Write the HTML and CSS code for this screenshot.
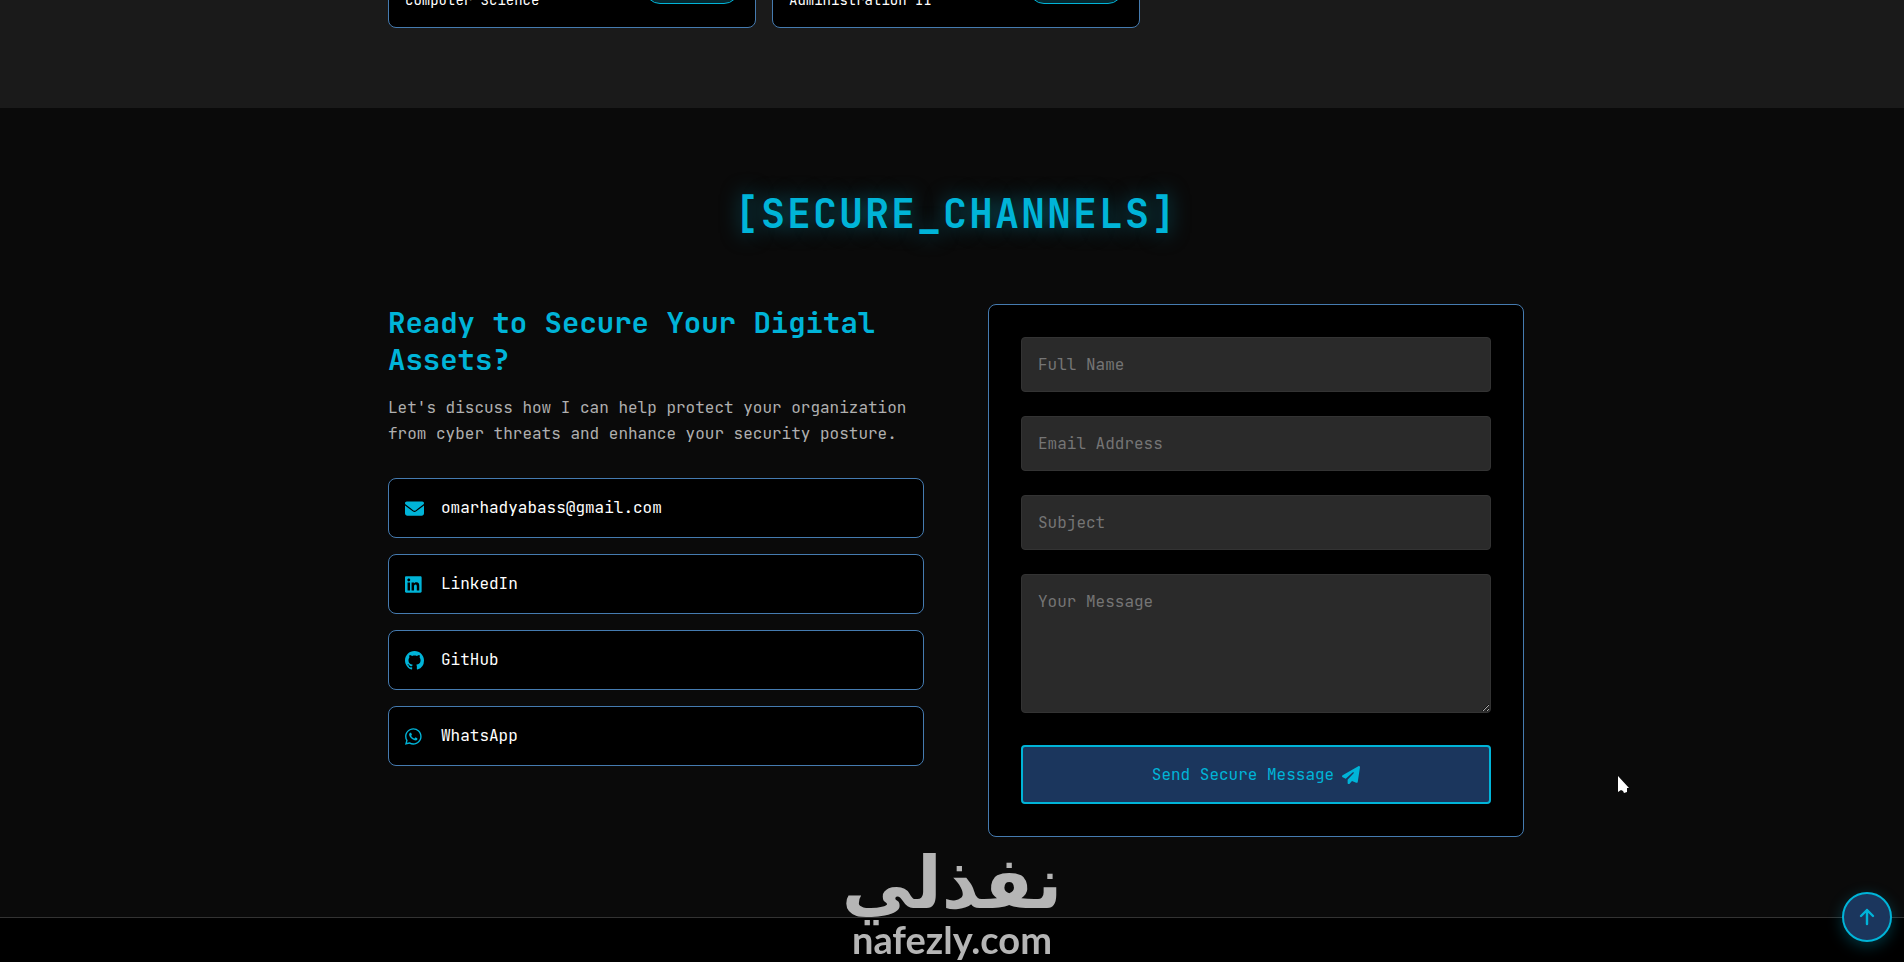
FILE: index.html
```html
<!DOCTYPE html>
<html lang="en">
<head>
    <meta charset="utf-8">
    <meta name="viewport" content="width=device-width, initial-scale=1">
    <title>Secure Channels</title>
    <link rel="stylesheet" href="styles.css">
</head>
<body>
    <section class="courses">
        <div class="container courses-grid">
            <div class="course-card">
                <span>Computer Science</span>
                <span class="course-badge"></span>
            </div>
            <div class="course-card">
                <span>Administration II</span>
                <span class="course-badge"></span>
            </div>
        </div>
    </section>

    <section class="contact" id="contact">
        <div class="container">
            <h2 class="section-title">[SECURE_CHANNELS]</h2>
            <div class="contact-content">
                <div class="contact-info">
                    <h3>Ready to Secure Your Digital Assets?</h3>
                    <p>Let's discuss how I can help protect your organization from cyber threats and enhance your security posture.</p>
                    <div class="contact-links">
                        <a class="contact-link" href="mailto:omarhadyabass@gmail.com">
                            <svg class="icon" viewBox="0 0 512 512"><path d="M48 64C21.500 64 0 85.500 0 112c0 15.100 7.100 29.300 19.200 38.400L236.800 313.600c11.400 8.500 27 8.500 38.400 0L492.800 150.400c12.100-9.100 19.200-23.300 19.200-38.400c0-26.500-21.500-48-48-48H48zM0 176V384c0 35.300 28.700 64 64 64H448c35.300 0 64-28.700 64-64V176L294.400 339.200c-22.800 17.100-54 17.100-76.800 0L0 176z"/></svg>
                            <span>omarhadyabass@gmail.com</span>
                        </a>
                        <a class="contact-link" href="#">
                            <svg class="icon" viewBox="0 0 512 512"><path d="M416 32H31.900C14.300 32 0 46.500 0 64.300v383.400C0 465.500 14.300 480 31.900 480H416c17.600 0 32-14.500 32-32.300V64.300c0-17.800-14.400-32.300-32-32.300zM135.400 416H69V202.200h66.500V416zm-33.200-243c-21.300 0-38.500-17.300-38.500-38.500S80.900 96 102.200 96c21.200 0 38.500 17.300 38.500 38.500 0 21.300-17.200 38.500-38.500 38.500zm282.100 243h-66.400V312c0-24.800-.5-56.700-34.500-56.700-34.600 0-39.900 27-39.900 54.900V416h-66.400V202.200h63.700v29.200h.9c8.900-16.800 30.600-34.500 62.900-34.500 67.200 0 79.700 44.300 79.700 101.900V416z"/></svg>
                            <span>LinkedIn</span>
                        </a>
                        <a class="contact-link" href="#">
                            <svg class="icon" viewBox="0 0 16 16"><path d="M8 0C3.580 0 0 3.580 0 8c0 3.540 2.290 6.530 5.470 7.590.4.070.55-.17.55-.38 0-.19-.01-.82-.01-1.490-2.010.37-2.530-.49-2.690-.94-.09-.23-.48-.94-.82-1.130-.28-.15-.68-.52-.01-.53.63-.01 1.080.58 1.230.82.72 1.210 1.870.87 2.330.66.07-.52.28-.87.51-1.070-1.780-.2-3.640-.89-3.640-3.950 0-.87.31-1.590.82-2.150-.08-.2-.36-1.020.08-2.120 0 0 .67-.21 2.200.82.64-.18 1.320-.27 2-.27s1.360.09 2 .27c1.530-1.040 2.200-.82 2.200-.82.44 1.100.16 1.920.08 2.120.51.56.82 1.270.82 2.150 0 3.070-1.870 3.750-3.650 3.950.29.25.54.73.54 1.480 0 1.070-.01 1.930-.01 2.200 0 .21.15.46.55.38A8.010 8.010 0 0 0 16 8c0-4.420-3.580-8-8-8z"/></svg>
                            <span>GitHub</span>
                        </a>
                        <a class="contact-link" href="#">
                            <svg class="icon" viewBox="0 0 512 512"><path d="M380.900 97.100C339 55.100 283.200 32 223.900 32c-122.400 0-222 99.600-222 222 0 39.100 10.200 77.300 29.600 111L0 480l117.700-30.900c32.400 17.700 68.900 27 106.100 27h.1c122.300 0 224.100-99.600 224.100-222 0-59.300-25.200-115-67.100-157zm-157 341.600c-33.200 0-65.700-8.900-94-25.700l-6.700-4-69.800 18.300L72 359.200l-4.400-7c-18.500-29.400-28.200-63.300-28.200-98.200 0-101.700 82.800-184.500 184.600-184.500 49.300 0 95.600 19.200 130.400 54.100 34.800 34.900 56.200 81.200 56.100 130.500 0 101.800-84.900 184.600-186.600 184.600zm101.200-138.200c-5.500-2.800-32.800-16.200-37.900-18-5.100-1.900-8.800-2.800-12.500 2.800-3.700 5.600-14.300 18-17.600 21.800-3.200 3.700-6.500 4.200-12 1.400-32.600-16.300-54-29.100-75.500-66-5.700-9.800 5.700-9.100 16.300-30.300 1.800-3.700.9-6.900-.5-9.700-1.400-2.800-12.500-30.100-17.100-41.200-4.500-10.800-9.100-9.300-12.500-9.500-3.200-.2-6.900-.2-10.600-.2-3.700 0-9.700 1.400-14.800 6.900-5.100 5.600-19.400 19-19.400 46.300 0 27.300 19.900 53.700 22.600 57.400 2.800 3.700 39.100 59.700 94.800 83.800 35.200 15.200 49 16.500 66.600 13.900 10.700-1.600 32.800-13.400 37.400-26.400 4.600-13 4.600-24.100 3.200-26.400-1.300-2.500-5-3.900-10.500-6.600z"/></svg>
                            <span>WhatsApp</span>
                        </a>
                    </div>
                </div>

                <form class="contact-form">
                    <input type="text" placeholder="Full Name" aria-label="Full Name">
                    <input type="email" placeholder="Email Address" aria-label="Email Address">
                    <input type="text" placeholder="Subject" aria-label="Subject">
                    <textarea rows="5" placeholder="Your Message" aria-label="Your Message"></textarea>
                    <button class="btn" type="submit">
                        <span>Send Secure Message</span>
                        <svg class="btn-icon" viewBox="0 0 512 512"><path d="M498.100 5.600c10.100 7 15.400 19.100 13.500 31.200l-64 416c-1.500 9.700-7.400 18.200-16 23s-18.900 5.400-28 1.600L284 427.700l-68.500 74.100c-8.900 9.700-22.900 12.900-35.200 8.100S160 493.200 160 480V396.400c0-4 1.500-7.800 4.200-10.700L331.800 202.800c5.800-6.300 5.600-16-.4-22s-15.700-6.400-22-.7L106 360.800 17.700 316.600C7.100 311.300.3 300.700 0 288.900s5.900-22.800 16.100-28.700l448-256c10.700-6.100 23.900-5.500 34 1.400z"/></svg>
                    </button>
                </form>
            </div>
        </div>
    </section>

    <footer class="footer"></footer>

    <button class="back-to-top" type="button" aria-label="Back to top">
        <svg viewBox="0 0 18 18"><path d="M9 16V2M3 8l6-6 6 6"/></svg>
    </button>

    <div class="watermark">
        <span class="watermark-ar" lang="ar" dir="rtl">نفذلي</span>
        <span class="watermark-en">nafezly.com</span>
    </div>

    <svg class="cursor" viewBox="0 0 11 17"><path d="M0 0v16l3-2 2 1 1 2 3-1v-4h2z"/></svg>
</body>
</html>
```
FILE: styles.css
```css
* {
    margin: 0;
    padding: 0;
    box-sizing: border-box;
}

:root {
    --accent: #00b4d8;
    --navy: #1b365d;
    --line: #457bb0;
    --dark: #0a0a0a;
    --grey: #2a2a2a;
}

body {
    display: flex;
    flex-direction: column;
    min-height: 100vh;
    background: var(--dark);
    color: #fff;
    font-family: "JetBrains Mono", "DejaVu Sans Mono", monospace;
    font-size: 16px;
    line-height: 26px;
}

.container {
    width: 100%;
    max-width: 1200px;
    margin: 0 auto;
    padding: 0 32px;
}

/* Courses */
.courses {
    display: flex;
    align-items: flex-end;
    height: 108px;
    padding: 0 0 80px 8px;
    background: #1a1a1a;
}

.courses-grid {
    display: grid;
    grid-template-columns: repeat(3, 1fr);
    gap: 16px;
}

.course-card {
    display: flex;
    justify-content: space-between;
    align-items: flex-end;
    padding: 16px;
    background: #000;
    border: 1px solid var(--line);
    border-radius: 8px;
    font-size: 14px;
    line-height: 22px;
}

.course-badge {
    width: 94px;
    height: 30px;
    margin-bottom: 7px;
    background: #06282f;
    border: 1px solid var(--accent);
    border-radius: 15px;
}

/* Contact */
.contact {
    padding: 80px 0 80px 8px;
}

.section-title {
    margin-bottom: 64px;
    color: var(--accent);
    font-size: 40px;
    line-height: 52px;
    letter-spacing: 2px;
    text-align: center;
    text-shadow: 0 0 20px rgba(0, 180, 216, 0.5);
}

.contact-content {
    display: grid;
    grid-template-columns: 1fr 1fr;
    gap: 64px;
}

.contact-info h3 {
    margin-bottom: 17px;
    color: var(--accent);
    font-size: 29px;
    font-weight: 600;
    line-height: 37px;
}

.contact-info p {
    margin-bottom: 31px;
    color: #b0b0b0;
}

.contact-links {
    display: flex;
    flex-direction: column;
    gap: 16px;
}

.contact-link {
    display: flex;
    align-items: center;
    gap: 17px;
    padding: 16px;
    background: #000;
    border: 1px solid var(--line);
    border-radius: 8px;
    color: #fff;
    text-decoration: none;
}

.icon {
    width: 19px;
    height: 19px;
    fill: var(--accent);
}

.contact-form {
    display: flex;
    flex-direction: column;
    gap: 24px;
    padding: 32px;
    background: #000;
    border: 1px solid var(--line);
    border-radius: 8px;
}

.contact-form input,
.contact-form textarea {
    width: 100%;
    padding: 16px;
    background: var(--grey);
    border: 1px solid #333;
    border-radius: 4px;
    color: #fff;
    font: inherit;
    line-height: 21px;
}

.contact-form input {
    height: 55px;
}

.contact-form textarea {
    display: block;
    height: 139px;
    resize: vertical;
}

.contact-form ::placeholder {
    color: #757575;
}

.btn {
    display: flex;
    justify-content: center;
    align-items: center;
    gap: 8px;
    height: 59px;
    margin-top: 8px;
    background: var(--navy);
    border: 2px solid var(--accent);
    border-radius: 4px;
    color: var(--accent);
    font: inherit;
    cursor: pointer;
}

.btn-icon {
    width: 18px;
    height: 18px;
    fill: var(--accent);
}

.footer {
    flex: 1;
    background: #000;
    border-top: 1px solid #333;
}

/* Overlays */
.back-to-top {
    position: fixed;
    right: 12px;
    bottom: 20px;
    display: flex;
    justify-content: center;
    align-items: center;
    width: 50px;
    height: 50px;
    background: var(--navy);
    border: 2px solid var(--accent);
    border-radius: 50%;
    box-shadow: 0 4px 15px rgba(0, 180, 216, 0.3);
    cursor: pointer;
}

.back-to-top svg {
    width: 18px;
    height: 18px;
    fill: none;
    stroke: var(--accent);
    stroke-width: 2.4;
    stroke-linecap: round;
    stroke-linejoin: round;
}

.watermark {
    position: fixed;
    left: 50%;
    bottom: 4px;
    display: flex;
    flex-direction: column;
    align-items: center;
    transform: translateX(-50%);
    color: #b5b5b5;
    font-weight: 700;
    pointer-events: none;
}

.watermark-ar {
    font-family: "DejaVu Sans", sans-serif;
    font-size: 72px;
    line-height: 74px;
}

.watermark-en {
    font-family: Lato, sans-serif;
    font-size: 38px;
    line-height: 38px;
}

.cursor {
    position: fixed;
    left: 85%;
    top: 776px;
    width: 11px;
    height: 17px;
    fill: #fff;
}
```
